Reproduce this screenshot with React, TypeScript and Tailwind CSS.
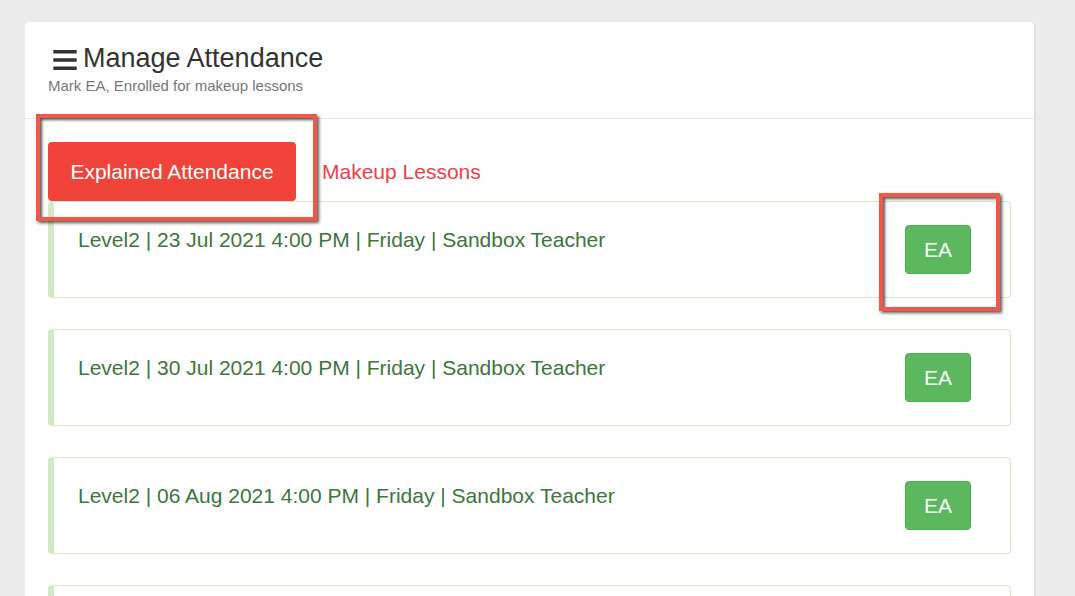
import React from "react";

const items = [
  "Level2 | 23 Jul 2021 4:00 PM | Friday | Sandbox Teacher",
  "Level2 | 30 Jul 2021 4:00 PM | Friday | Sandbox Teacher",
  "Level2 | 06 Aug 2021 4:00 PM | Friday | Sandbox Teacher",
];

export default function App() {
  return (
    <div
      className="h-[596px] w-full overflow-hidden bg-[#ececec] pt-[22px] pl-[25px] pr-[41px]"
      style={{ fontFamily: '"Liberation Sans", Arial, sans-serif' }}
    >
      <div className="relative w-[1009px] rounded-[4px] bg-white shadow-[1px_1px_2px_rgba(0,0,0,0.08)]">
        <div className="border-b border-[#e8e8e8] px-[23px] pt-[22px] pb-[22px]">
          <div className="flex items-center gap-[6px] pl-[5px]">
            <svg width="24" height="21" viewBox="0 0 24 21" className="mt-[1px]">
              <rect x="0.3" y="1" width="23.4" height="3.4" rx="0.5" fill="#333" />
              <rect x="0.3" y="9.3" width="23.4" height="3.4" rx="0.5" fill="#333" />
              <rect x="0.3" y="17.6" width="23.4" height="3.4" rx="0.5" fill="#333" />
            </svg>
            <h1 className="text-[27px] leading-[29px] text-[#333]">Manage Attendance</h1>
          </div>
          <p className="mt-[3px] text-[15px] leading-[20px] text-[#777]">
            Mark EA, Enrolled for makeup lessons
          </p>
        </div>
        <div className="px-[23px] pt-[23px]">
          <div className="flex items-center gap-[3px]">
            <button className="h-[59px] w-[248px] rounded-[4px] bg-[#f0433a] text-[21px] text-white">
              Explained Attendance
            </button>
            <span className="px-[23px] text-[21px] text-[#ef3e4a]">Makeup Lessons</span>
          </div>
          <div className="flex flex-col gap-[31px]">
            {items.map((t, i) => (
              <div
                key={i}
                className="flex h-[97px] items-start justify-between rounded-[4px] border border-l-[6px] border-[#d6e9c6] pl-[24px] pr-[39px] pt-[23px]"
              >
                <span className="text-[21px] leading-[30px] text-[#3c763d]">{t}</span>
                <button className="h-[49px] w-[66px] rounded-[4px] border border-[#4cae4c] bg-[#5cb85c] text-[21px] text-white">
                  EA
                </button>
              </div>
            ))}
            <div className="h-[97px] rounded-[4px] border border-l-[6px] border-[#d6e9c6]" />
          </div>
        </div>
        <div className="pointer-events-none absolute left-[11px] top-[92px] h-[107px] w-[281px] border-[4px] border-[#f5564a] shadow-[2px_2px_3px_rgba(0,0,0,0.65),inset_2px_2px_3px_rgba(0,0,0,0.65)]" />
        <div className="pointer-events-none absolute left-[854px] top-[171px] h-[118px] w-[121px] border-[4px] border-[#f5564a] shadow-[2px_2px_3px_rgba(0,0,0,0.65),inset_2px_2px_3px_rgba(0,0,0,0.65)]" />
      </div>
    </div>
  );
}
